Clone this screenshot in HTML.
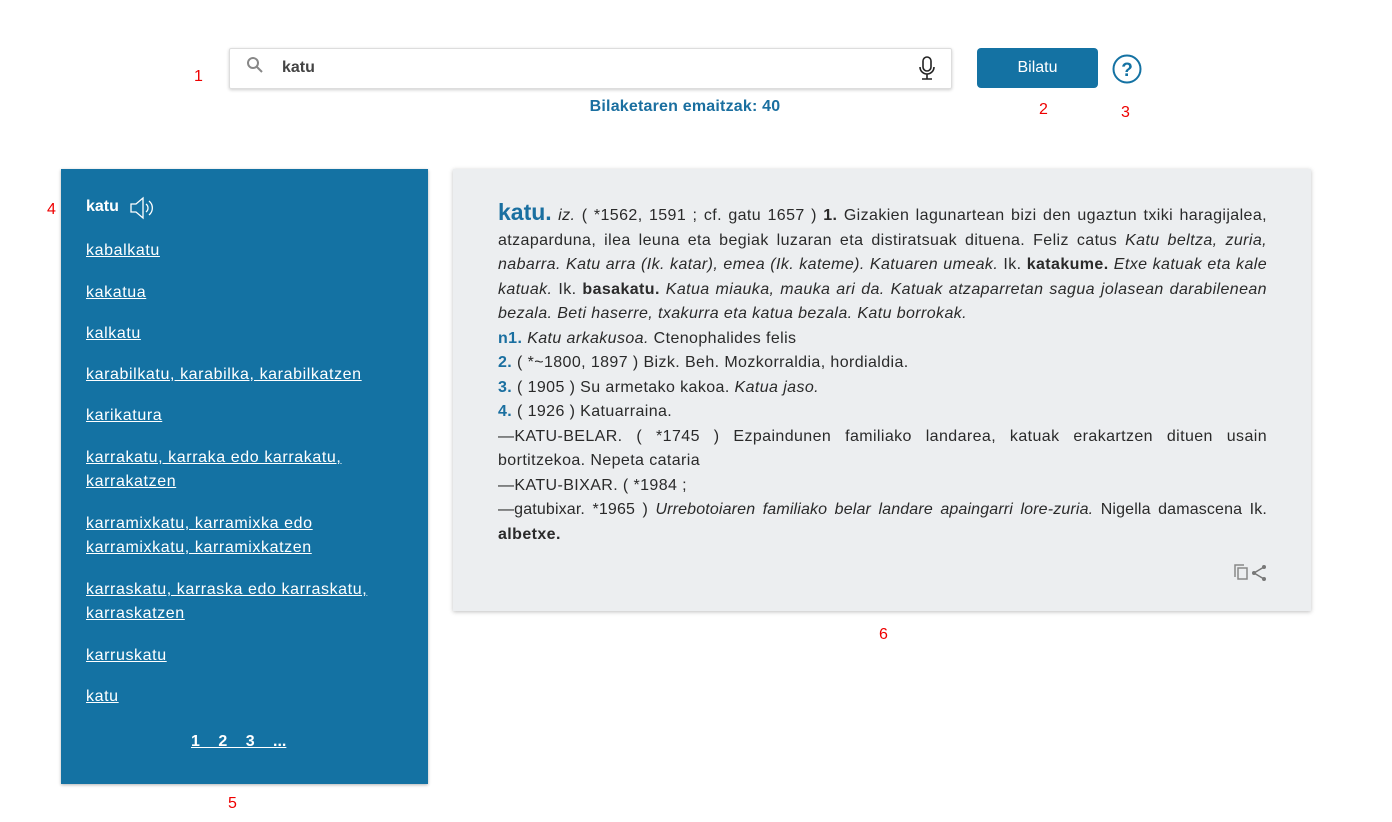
<!DOCTYPE html>
<html><head><meta charset="utf-8"><style>
body{margin:0;width:1392px;height:822px;background:#fff;font-family:"Liberation Sans",Arial,sans-serif;position:relative;overflow:hidden;color:#222}
.abs{position:absolute}
.lbl{position:absolute;color:#e00;font-size:16px}
.search{left:229px;top:48px;width:723px;height:41px;border:1px solid #ddd;box-shadow:0 1px 3px rgba(0,0,0,.2);box-sizing:border-box;border-radius:2px}
.btn{left:977px;top:48px;width:121px;height:40px;background:#1472a3;border-radius:4px;color:#fff;font-size:16px;text-align:center;line-height:40px}
.side{left:61px;top:169px;width:367px;height:615px;background:#1472a3;box-shadow:0 1px 3px rgba(0,0,0,.3)}
.side a{position:absolute;left:25px;color:#fff;text-decoration:underline;font-size:16px;line-height:24px;letter-spacing:0.6px}
.card{left:453px;top:169px;width:858px;height:442px;background:#eceef0;box-shadow:0 1px 4px rgba(0,0,0,.25)}
.txt{position:absolute;left:45px;top:31px;width:769px;font-size:16px;letter-spacing:0.4px;line-height:24.5px;text-align:justify;color:#2a2a2a}
.b{color:#1a6fa0;font-weight:bold}
</style></head><body>
<div class="lbl" style="left:194px;top:68px">1</div>
<div class="lbl" style="left:1039px;top:101px">2</div>
<div class="lbl" style="left:1121px;top:104px">3</div>
<div class="lbl" style="left:47px;top:201px">4</div>
<div class="lbl" style="left:228px;top:795px">5</div>
<div class="lbl" style="left:879px;top:626px">6</div>
<div class="abs search">
<svg class="abs" style="left:16px;top:7px" width="18" height="18" viewBox="0 0 18 18"><circle cx="7" cy="7" r="5" fill="none" stroke="#888" stroke-width="2"/><path d="M11 11l5 5" stroke="#888" stroke-width="2"/></svg>
<div class="abs" style="left:52px;top:10px;font-size:16px;font-weight:bold;color:#444">katu</div>
<svg class="abs" style="left:688px;top:7px" width="18" height="26" viewBox="0 0 18 26"><rect x="5" y="1" width="8" height="14" rx="4" fill="none" stroke="#222" stroke-width="1.6"/><path d="M2 11a7 7 0 0 0 14 0M9 18v5M4 23h10" fill="none" stroke="#222" stroke-width="1.6"/></svg>
</div>
<div class="abs btn">Bilatu</div>
<svg class="abs" style="left:1112px;top:54px" width="30" height="30" viewBox="0 0 30 30"><circle cx="15" cy="15" r="13.5" fill="none" stroke="#1472a3" stroke-width="2"/><text x="15" y="22" text-anchor="middle" font-size="19" font-family="Liberation Sans" font-weight="bold" fill="#1472a3">?</text></svg>
<div class="abs" style="left:0;width:1370px;text-align:center;top:98px;font-size:16px;font-weight:bold;color:#1a6fa0;letter-spacing:0.2px">Bilaketaren emaitzak: 40</div>
<div class="abs side">
<div class="abs" style="left:25px;top:29px;color:#fff;font-weight:bold;font-size:16px">katu</div>
<svg class="abs" style="left:68px;top:27px" width="28" height="24" viewBox="0 0 28 24"><path d="M2 8h5l7-6v20l-7-6H2z" fill="none" stroke="#fff" stroke-width="1.3"/><path d="M17 8a5 5 0 0 1 0 8M20 5a9 9 0 0 1 0 14" fill="none" stroke="#fff" stroke-width="1.3"/></svg>
<a style="top:70px">kabalkatu</a>
<a style="top:112px">kakatua</a>
<a style="top:153px">kalkatu</a>
<a style="top:194px">karabilkatu, karabilka, karabilkatzen</a>
<a style="top:235px">karikatura</a>
<a style="top:277px">karrakatu, karraka edo karrakatu,<br>karrakatzen</a>
<a style="top:343px">karramixkatu, karramixka edo<br>karramixkatu, karramixkatzen</a>
<a style="top:409px">karraskatu, karraska edo karraskatu,<br>karraskatzen</a>
<a style="top:475px">karruskatu</a>
<a style="top:516px">katu</a>
<div class="abs" style="left:130px;top:564px;color:#fff;font-weight:bold;font-size:16px;text-decoration:underline;word-spacing:14px">1 2 3 ...</div>
</div>
<div class="abs card">
<div class="txt"><span class="b" style="font-size:23px;letter-spacing:0">katu.</span> <i>iz.</i> ( *1562, 1591 ; cf. gatu 1657 ) <b>1.</b> Gizakien lagunartean bizi den ugaztun txiki haragijalea, atzaparduna, ilea leuna eta begiak luzaran eta distiratsuak dituena. Feliz catus <i>Katu beltza, zuria, nabarra. Katu arra (Ik. katar), emea (Ik. kateme). Katuaren umeak.</i> Ik. <b>katakume.</b> <i>Etxe katuak eta kale katuak.</i> Ik. <b>basakatu.</b> <i>Katua miauka, mauka ari da. Katuak atzaparretan sagua jolasean darabilenean bezala. Beti haserre, txakurra eta katua bezala. Katu borrokak.</i><br>
<span class="b">n1.</span> <i>Katu arkakusoa.</i> Ctenophalides felis<br>
<span class="b">2.</span> ( *~1800, 1897 ) Bizk. Beh. Mozkorraldia, hordialdia.<br>
<span class="b">3.</span> ( 1905 ) Su armetako kakoa. <i>Katua jaso.</i><br>
<span class="b">4.</span> ( 1926 ) Katuarraina.<br>
—KATU-BELAR. ( *1745 ) Ezpaindunen familiako landarea, katuak erakartzen dituen usain bortitzekoa. Nepeta cataria<br>
—KATU-BIXAR. ( *1984 ;<br>
<span style="letter-spacing:0.15px">—gatubixar. *1965 ) <i>Urrebotoiaren familiako belar landare apaingarri lore-zuria.</i> Nigella damascena Ik.</span> <b>albetxe.</b></div>
<svg class="abs" style="left:781px;top:395px" width="34" height="18" viewBox="0 0 34 18"><rect x="4" y="4" width="9" height="11" fill="none" stroke="#888" stroke-width="1.5"/><path d="M1 13V1h9" fill="none" stroke="#888" stroke-width="1.5"/><path d="M30 3L20 9l10 6" fill="none" stroke="#777" stroke-width="1.5"/><circle cx="30" cy="3" r="2" fill="#777"/><circle cx="20" cy="9" r="2" fill="#777"/><circle cx="30" cy="15" r="2" fill="#777"/></svg>
</div>
</body></html>
